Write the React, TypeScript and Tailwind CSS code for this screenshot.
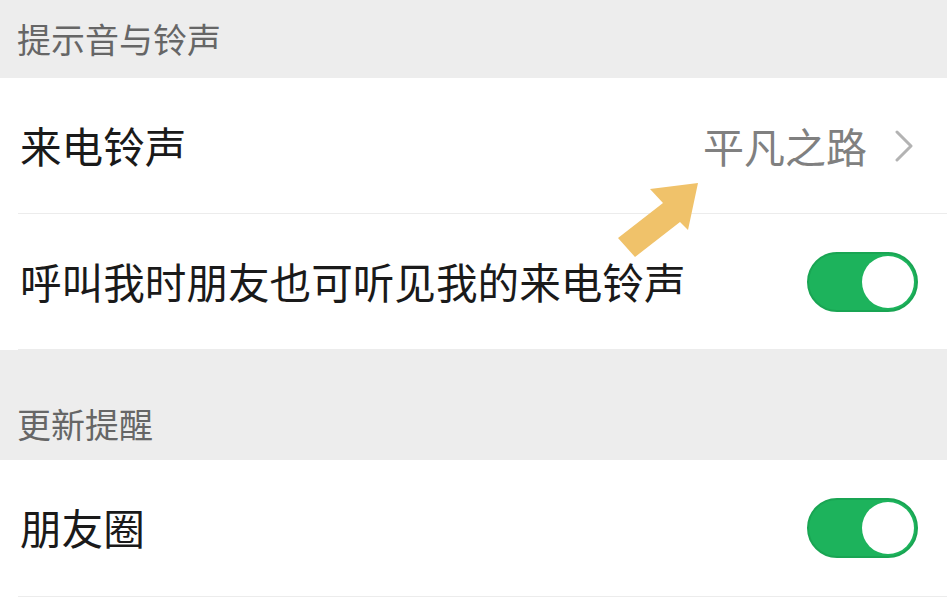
const font = { fontFamily: '"Noto Sans CJK SC", "Noto Sans", sans-serif' };

const Toggle = () => (
  <div className="w-[111px] h-[60px] rounded-full bg-[#1db35c] border-2 border-[#19a553] flex items-center justify-end pr-[2px]">
    <div className="w-[52px] h-[52px] rounded-full bg-white" />
  </div>
);

const Chevron = () => (
  <svg width="20" height="32" viewBox="0 0 20 32" fill="none">
    <path d="M3 2 L17 16 L3 30" stroke="#b3b3b3" strokeWidth="3" strokeLinecap="round" strokeLinejoin="round" />
  </svg>
);

const Row = ({ label, right, h, pr }: { label: string; right: React.ReactNode; h: string; pr: string }) => (
  <div className="pl-[18px] bg-white">
    <div className={`${h} ${pr} pl-[2px] flex items-center justify-between border-b border-[#ececec]`}>
      <span className="text-[41.6px] leading-none text-[#1a1a1a]">{label}</span>
      {right}
    </div>
  </div>
);

export default function App() {
  return (
    <div className="relative w-[947px] h-[613px] bg-white overflow-hidden" style={font}>
      <div className="h-[78px] bg-[#ededed] flex items-center pl-[17px]">
        <span className="text-[34px] leading-none text-[#666666]">提示音与铃声</span>
      </div>
      <Row
        label="来电铃声"
        h="h-[136px]"
        pr="pr-[33px]"
        right={
          <div className="flex items-center gap-[27px]">
            <span className="text-[41px] leading-none text-[#808080]">平凡之路</span>
            <Chevron />
          </div>
        }
      />
      <Row label="呼叫我时朋友也可听见我的来电铃声" h="h-[136px]" pr="pr-[29px]" right={<Toggle />} />
      <div className="h-[110px] bg-[#ededed] flex items-end pb-[19px] pl-[17px]">
        <span className="text-[34px] leading-none text-[#666666]">更新提醒</span>
      </div>
      <Row label="朋友圈" h="h-[137px]" pr="pr-[29px]" right={<Toggle />} />

      {/* annotation arrow */}
      <svg className="absolute left-0 top-0" width="947" height="613" viewBox="0 0 947 613">
        <polygon
          points="698,183 688,230 680,222 635,257 618,238 663,203 650,189"
          fill="#f0c26a"
        />
      </svg>
    </div>
  );
}
